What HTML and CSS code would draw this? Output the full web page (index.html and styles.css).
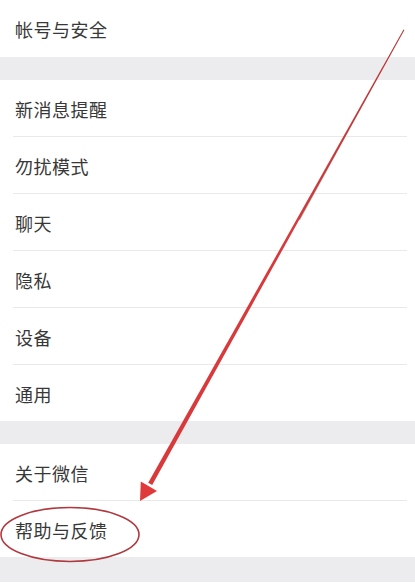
FILE: index.html
```html
<!DOCTYPE html>
<html lang="zh-CN">
<head>
<meta charset="utf-8">
<title>设置</title>
<link rel="stylesheet" href="styles.css">
</head>
<body>
<div class="page">
  <div class="group group-first">
    <div class="row"><span class="label">帐号与安全</span></div>
  </div>
  <div class="gap"></div>
  <div class="group">
    <div class="row"><span class="label">新消息提醒</span></div>
    <div class="row"><span class="label">勿扰模式</span></div>
    <div class="row"><span class="label">聊天</span></div>
    <div class="row"><span class="label">隐私</span></div>
    <div class="row"><span class="label">设备</span></div>
    <div class="row"><span class="label">通用</span></div>
  </div>
  <div class="gap gap-mid"></div>
  <div class="group">
    <div class="row"><span class="label">关于微信</span></div>
    <div class="row"><span class="label">帮助与反馈</span></div>
  </div>
  <div class="gap gap-last"></div>
  <div class="tail"></div>

  <svg class="annot" width="415" height="586" viewBox="0 0 415 586" xmlns="http://www.w3.org/2000/svg">
    <ellipse cx="70" cy="534.5" rx="69" ry="27" fill="none" stroke="#b0393f" stroke-width="1.6"/>
    <polygon points="403.6,29.5 404.4,30 152.2,485 148.2,482.8" fill="#d8393b"/>
    <polygon points="403.6,29.5 404.2,29.8 300,220 298.8,219.2" fill="#8a3a35" opacity="0.5"/>
    <polygon points="140,501 140.8,481.5 157,491" fill="#e0393b"/>
  </svg>
</div>
</body>
</html>
```
FILE: styles.css
```css
html, body {
  margin: 0;
  padding: 0;
  background: #ffffff;
}

.page {
  position: relative;
  width: 415px;
  height: 586px;
  overflow: hidden;
  font-family: "Noto Sans CJK SC", "Noto Sans", sans-serif;
  background: #ffffff;
}

.group {
  display: flex;
  flex-direction: column;
  background: #ffffff;
}

.row {
  height: 57px;
  display: flex;
  align-items: center;
  margin-left: 13px;
  margin-right: 8px;
  padding-left: 2px;
  padding-top: 2px;
  box-sizing: border-box;
  border-bottom: 1px solid #e9e9e9;
}

.row:last-child {
  height: 56px;
  border-bottom: none;
}

.group-first .row:last-child {
  height: 57px;
  padding-top: 1px;
}

.label {
  font-size: 18px;
  letter-spacing: 0.5px;
  color: #383838;
  line-height: 1;
}

.gap {
  height: 23px;
  background: #ececee;
}

.gap-last {
  height: 25px;
}

.tail {
  height: 10px;
  background: #ffffff;
}

.annot {
  position: absolute;
  left: 0;
  top: 0;
  pointer-events: none;
}
```
